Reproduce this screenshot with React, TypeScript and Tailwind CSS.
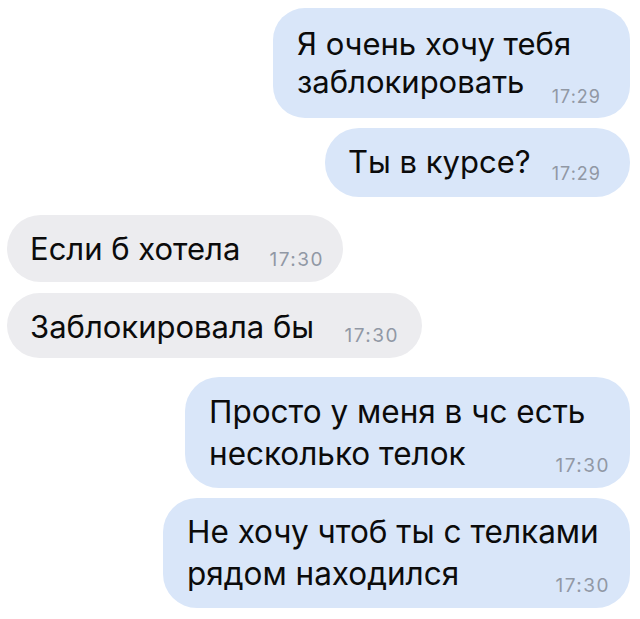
import React from "react";

type B = {
  side: "l" | "r";
  lines: string[];
  time: string;
  box: string;
  text: string;
  timeCls: string;
};

const bubbles: B[] = [
  {
    side: "r",
    lines: ["Я очень хочу тебя", "заблокировать"],
    time: "17:29",
    box: "w-[357px] mr-[10px] mt-[8px] pl-[24px] pr-[29px] pt-[17px] pb-[17px] bg-[#d9e6f9] rounded-[32px]",
    text: "text-[31px] leading-[38px]",
    timeCls: "text-[18px] tracking-[1px] -mb-[5px]",
  },
  {
    side: "r",
    lines: ["Ты в курсе?"],
    time: "17:29",
    box: "w-[305px] mr-[10px] mt-[10px] pl-[23px] pr-[29px] pt-[15px] pb-[16px] bg-[#d9e6f9] rounded-[34px]",
    text: "text-[31px] leading-[38px]",
    timeCls: "text-[18px] tracking-[1px] -mb-[2px]",
  },
  {
    side: "l",
    lines: ["Если б хотела"],
    time: "17:30",
    box: "w-[336px] ml-[7px] mt-[18px] pl-[23px] pr-[19px] pt-[15px] pb-[14px] bg-[#ececef] rounded-[34px]",
    text: "text-[31px] leading-[38px]",
    timeCls: "text-[19px] tracking-[1.5px] -mb-[1px]",
  },
  {
    side: "l",
    lines: ["Заблокировала бы"],
    time: "17:30",
    box: "w-[415px] ml-[7px] mt-[11px] pl-[23px] pr-[23px] pt-[15px] pb-[12px] bg-[#ececef] rounded-[33px]",
    text: "text-[31px] leading-[38px]",
    timeCls: "text-[19px] tracking-[1.5px] mb-[1px]",
  },
  {
    side: "r",
    lines: ["Просто у меня в чс есть", "несколько телок"],
    time: "17:30",
    box: "w-[445px] mr-[10px] mt-[19px] pl-[24px] pr-[20px] pt-[14px] pb-[13px] bg-[#d9e6f9] rounded-[34px]",
    text: "text-[31.5px] leading-[42px]",
    timeCls: "text-[19px] tracking-[1.5px] mb-0",
  },
  {
    side: "r",
    lines: ["Не хочу чтоб ты с телками", "рядом находился"],
    time: "17:30",
    box: "w-[467px] mr-[10px] mt-[10px] pl-[24px] pr-[20px] pt-[13px] pb-[13px] bg-[#d9e6f9] rounded-[34px]",
    text: "text-[31.5px] leading-[42px]",
    timeCls: "text-[19px] tracking-[1.5px] mb-0",
  },
];

export default function App() {
  return (
    <div
      className="w-[640px] h-[619px] bg-white flex flex-col overflow-hidden"
      style={{ fontFamily: 'Inter, "Liberation Sans", Arial, sans-serif' }}
    >
      {bubbles.map((b, i) => (
        <div
          key={i}
          className={`flex ${b.side === "r" ? "justify-end" : "justify-start"}`}
        >
          <div className={`grid ${b.box}`}>
            <div
              className={`col-start-1 row-start-1 text-[#0b0b0b] whitespace-nowrap ${b.text}`}
            >
              {b.lines.map((l, j) => (
                <div key={j}>{l}</div>
              ))}
            </div>
            <span
              className={`col-start-1 row-start-1 self-end justify-self-end leading-none text-[#9198a5] ${b.timeCls}`}
            >
              {b.time}
            </span>
          </div>
        </div>
      ))}
    </div>
  );
}
